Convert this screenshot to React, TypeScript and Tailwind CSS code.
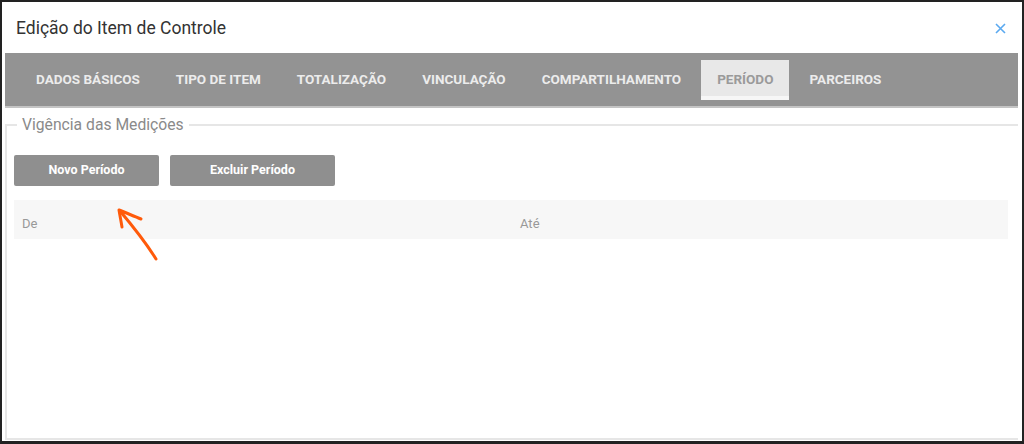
const tabs = [
  "DADOS BÁSICOS",
  "TIPO DE ITEM",
  "TOTALIZAÇÃO",
  "VINCULAÇÃO",
  "COMPARTILHAMENTO",
  "PERÍODO",
  "PARCEIROS",
];

function Arrow() {
  return (
    <svg
      className="absolute left-[108px] top-[200px]"
      width="56"
      height="64"
      viewBox="0 0 56 64"
      fill="none"
    >
      <path
        d="M46 57 C38 44 26 28 10 9"
        stroke="#ff5a0a"
        strokeWidth="3"
        strokeLinecap="round"
      />
      <path
        d="M12 25 C11 19 10 14 9 8 C16 11 24 14 31 17"
        stroke="#ff5a0a"
        strokeWidth="3"
        strokeLinecap="round"
        strokeLinejoin="round"
      />
    </svg>
  );
}

export default function App() {
  return (
    <div className="relative w-[1024px] h-[444px] bg-white border-2 border-b-[3px] border-[#222] flex flex-col font-['Roboto',sans-serif] overflow-hidden">
      {/* Header */}
      <div className="flex items-center justify-between h-[51px] pl-[14px] pr-[16px] shrink-0">
        <h1 className="text-[17.5px] text-[#333] pt-[1px]">Edição do Item de Controle</h1>
        <svg width="11" height="11" viewBox="0 0 11 11" className="mt-[1px]">
          <path d="M1 1 L10 10 M10 1 L1 10" stroke="#5aa9f0" strokeWidth="1.6" />
        </svg>
      </div>

      {/* Tabs */}
      <div className="ml-[3px] mr-[4px] h-[55px] bg-[#939393] border-b-2 border-[#c4c4c4] flex items-center pl-[15px] gap-[4px] shrink-0">
        {tabs.map((t) =>
          t === "PERÍODO" ? (
            <div
              key={t}
              className="h-[40px] px-4 flex items-center bg-[#e8e8e8] border-b-4 border-[#f6f6f6] text-[13.5px] font-bold text-[#9a9a9a] pt-[4px]"
            >
              {t}
            </div>
          ) : (
            <div
              key={t}
              className="h-[40px] px-4 flex items-center text-[13.5px] font-bold text-[#ececec]"
            >
              {t}
            </div>
          )
        )}
      </div>

      {/* Fieldset */}
      <fieldset className="flex-1 ml-[3px] mr-[4px] mt-[7px] mb-[1px] border-2 border-r-0 border-[#e6e6e6] px-[7px] pb-2">
        <legend className="ml-[3px] px-[5px] text-[15.7px] text-[#8a8a8a] leading-[20px]">
          Vigência das Medições
        </legend>
        <div className="flex gap-[11px] mt-[20px]">
          <button className="w-[145px] h-[31px] bg-[#8f8f8f] rounded-[2px] text-white text-[12.5px] font-bold">
            Novo Período
          </button>
          <button className="w-[165px] h-[31px] bg-[#8f8f8f] rounded-[2px] text-white text-[12.5px] font-bold">
            Excluir Período
          </button>
        </div>
        <div className="mt-[14px] h-[39px] bg-[#f7f7f7] flex items-center text-[13px] text-[#999] pt-[8px] mr-[3px]">
          <div className="w-[498px] pl-[8px]">De</div>
          <div className="pl-[8px]">Até</div>
        </div>
      </fieldset>

      <Arrow />
    </div>
  );
}
